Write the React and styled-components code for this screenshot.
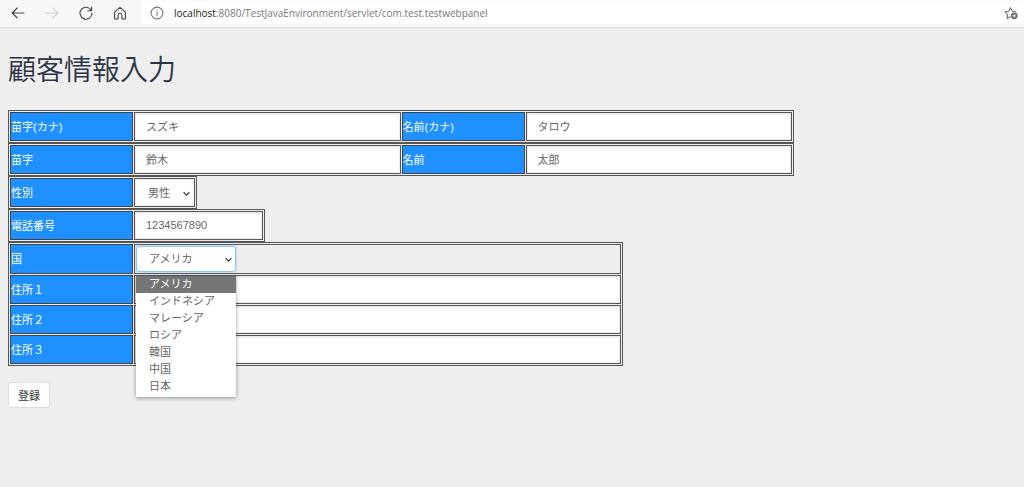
import React, { useState } from 'react'
import styled, { createGlobalStyle } from 'styled-components'

const GlobalStyle = createGlobalStyle`
  * {
    box-sizing: border-box;
  }
  body {
    margin: 0;
    background-color: #eee;
    font-family: 'Liberation Sans', 'Noto Sans CJK JP', sans-serif;
    font-size: 11px;
    color: #666;
  }
`
const Toolbar = styled.header`
  display: flex;
  align-items: center;
  height: 28px;
  padding-bottom: 2px;
  background-color: #f7f7f7;
  border-bottom: 1px solid #dcdcdc;
`
const NavButtons = styled.nav`
  display: flex;
  gap: 20px;
  padding: 0 14px 0 11px;
`
const NavButton = styled.button`
  display: flex;
  padding: 0;
  border: 0;
  background: none;
  color: ${props => (props.disabled ? '#d0d0d0' : '#444')};
`
const FavoriteButton = styled(NavButton)`
  color: #707070;
`
const AddressBar = styled.div`
  flex: 1;
  display: flex;
  align-items: center;
  height: 23px;
  padding: 0 6px 0 9px;
  border-radius: 3px 0 0 3px;
  background-color: #fff;
  color: #777;
`
const Url = styled.a`
  flex: 1;
  padding-left: 10px;
  font-family: 'Open Sans', sans-serif;
  font-size: 10px;
  line-height: 16px;
  color: #777;
  text-decoration: none;
`
const Host = styled.span`
  color: #222;
`
const Main = styled.main`
  padding: 19px 8px;
`
const Title = styled.h1`
  margin: 0 0 21px;
  font-family: 'Noto Sans CJK JP', sans-serif;
  font-size: 28px;
  font-weight: 350;
  line-height: 42px;
  color: #2c3347;
`
const Table = styled.table`
  table-layout: fixed;
  width: 100%;
  max-width: ${props => props.$maxWidth}px;
  border: 1px solid #555;
  border-spacing: 1px;
`
const LabelCell = styled.th`
  width: 123px;
  height: 29px;
  padding: 0;
  border: 1px solid #444;
  background-color: #1e90ff;
  color: #fff;
  font-weight: normal;
  line-height: 16px;
  text-align: left;
`
const FieldCell = styled.td`
  height: ${props => (props.$inset ? 30 : 29)}px;
  padding: ${props => (props.$inset ? '0 1px' : '0')};
  border: 1px solid #555;
`
const TextInput = styled.input`
  display: block;
  width: 100%;
  height: 27px;
  padding: 0 10px 2px;
  border: 1px solid #eee;
  border-radius: 2px;
  background-color: #fff;
  box-shadow: inset 0 1px 1px rgba(0, 0, 0, 0.07);
  color: #666;
  font: inherit;
  outline: none;
`
const SelectBox = styled.div`
  position: relative;
  width: ${props => props.$width};
  color: #444;
`
const StyledSelect = styled.select`
  display: block;
  appearance: none;
  width: 100%;
  height: ${props => (props.$active ? 26 : 27)}px;
  padding: 0 12px;
  border: 1px solid ${props => (props.$active ? '#8cc4ef' : '#eee')};
  border-radius: 3px;
  background-color: #fff;
  box-shadow: ${props =>
    props.$active ? '0 0 3px rgba(102, 175, 233, 0.6)' : 'none'};
  color: #666;
  font: inherit;
  outline: none;
`
const Chevron = styled.svg`
  position: absolute;
  top: 50%;
  right: 4px;
  margin-top: -2px;
  pointer-events: none;
`
const OptionList = styled.ul`
  position: absolute;
  z-index: 1;
  top: 100%;
  left: 0;
  width: 100%;
  margin: 4px 0 0;
  padding: 0 0 2px;
  list-style: none;
  background-color: #fff;
  box-shadow: 0 1px 4px rgba(0, 0, 0, 0.4);
`
const Option = styled.li`
  padding: 0 13px;
  line-height: 17px;
  color: ${props => (props['aria-selected'] ? '#fff' : '#666')};
  background-color: ${props => (props['aria-selected'] ? '#757575' : '#fff')};
`
const SubmitButton = styled.button`
  display: block;
  height: 26px;
  margin-top: 16px;
  padding: 0 9px;
  border: 1px solid #ddd;
  border-radius: 3px;
  background-color: #fff;
  color: #333;
  font: inherit;
`

const countries = [
  'アメリカ',
  'インドネシア',
  'マレーシア',
  'ロシア',
  '韓国',
  '中国',
  '日本',
]

const NavIcon = ({ children, size = 14 }) => (
  <svg
    width={size}
    height={size}
    viewBox="0 0 14 14"
    fill="none"
    stroke="currentColor"
    strokeWidth="1.1"
    strokeLinecap="round"
    strokeLinejoin="round"
    aria-hidden="true"
  >
    {children}
  </svg>
)

const TextField = ({ id, label, value }) => (
  <>
    <LabelCell scope="row">
      <label htmlFor={id}>{label}</label>
    </LabelCell>
    <FieldCell>
      <TextInput id={id} type="text" defaultValue={value} />
    </FieldCell>
  </>
)

const Select = ({ id, value, options, onChange, open, width }) => (
  <SelectBox $width={width}>
    <StyledSelect id={id} value={value} onChange={onChange} $active={open}>
      {options.map(o => (
        <option key={o}>{o}</option>
      ))}
    </StyledSelect>
    <Chevron width="7" height="6" viewBox="0 0 7 6" aria-hidden="true">
      <path
        d="M0.6 1.2 3.5 4.1 6.4 1.2"
        fill="none"
        stroke="currentColor"
        strokeWidth="1.3"
      />
    </Chevron>
    {open && (
      <OptionList role="listbox">
        {options.map(o => (
          <Option key={o} role="option" aria-selected={o === value}>
            {o}
          </Option>
        ))}
      </OptionList>
    )}
  </SelectBox>
)

const BrowserBar = () => (
  <Toolbar>
    <NavButtons>
      <NavButton aria-label="Back">
        <NavIcon>
          <path d="M13 7H1.2M6.2 2 1.2 7l5 5" />
        </NavIcon>
      </NavButton>
      <NavButton aria-label="Forward" disabled>
        <NavIcon>
          <path d="M1 7h11.8M7.8 2l5 5-5 5" />
        </NavIcon>
      </NavButton>
      <NavButton aria-label="Reload">
        <NavIcon>
          <path d="M12.4 4.6A6 6 0 1 0 13 7M12.6 1v3.8H8.8" />
        </NavIcon>
      </NavButton>
      <NavButton aria-label="Home">
        <NavIcon>
          <path d="M1.6 6.2 7 1.3l5.4 4.9v6a.8.8 0 0 1-.8.8H8.9V9.2a1.9 1.9 0 0 0-3.8 0V13H2.4a.8.8 0 0 1-.8-.8z" />
        </NavIcon>
      </NavButton>
    </NavButtons>
    <AddressBar>
      <NavIcon>
        <circle cx="7" cy="7" r="5.9" />
        <path d="M7 6.4v3.4M7 4.2v.2" />
      </NavIcon>
      <Url href="#">
        <Host>localhost</Host>
        :8080/TestJavaEnvironment/servlet/com.test.testwebpanel
      </Url>
      <FavoriteButton aria-label="Favorites">
        <NavIcon>
          <path d="M6.2 10.8 3 12.6l.6-3.9L.9 5.9l3.8-.6 1.8-3.5 1.8 3.5 3.6.5" />
          <circle cx="10.3" cy="9.8" r="2.8" fill="currentColor" />
          <path
            d="M9.2 9.8h2.2M10.3 8.7v2.2"
            stroke="#fff"
            strokeWidth="0.9"
          />
        </NavIcon>
      </FavoriteButton>
    </AddressBar>
  </Toolbar>
)

const App = () => {
  const [gender, setGender] = useState('男性')
  const [country, setCountry] = useState(countries[0])

  return (
    <>
      <GlobalStyle />
      <BrowserBar />
      <Main>
        <Title>顧客情報入力</Title>
        <Table $maxWidth={786}>
          <tbody>
            <tr>
              <TextField id="lastKana" label="苗字(カナ)" value="スズキ" />
              <TextField id="firstKana" label="名前(カナ)" value="タロウ" />
            </tr>
          </tbody>
        </Table>
        <Table $maxWidth={786}>
          <tbody>
            <tr>
              <TextField id="lastName" label="苗字" value="鈴木" />
              <TextField id="firstName" label="名前" value="太郎" />
            </tr>
          </tbody>
        </Table>
        <Table $maxWidth={189}>
          <tbody>
            <tr>
              <LabelCell scope="row">
                <label htmlFor="gender">性別</label>
              </LabelCell>
              <FieldCell>
                <Select
                  id="gender"
                  value={gender}
                  options={['男性', '女性']}
                  onChange={e => setGender(e.target.value)}
                  width="100%"
                />
              </FieldCell>
            </tr>
          </tbody>
        </Table>
        <Table $maxWidth={257}>
          <tbody>
            <tr>
              <TextField id="phone" label="電話番号" value="1234567890" />
            </tr>
          </tbody>
        </Table>
        <Table $maxWidth={615}>
          <tbody>
            <tr>
              <LabelCell scope="row">
                <label htmlFor="country">国</label>
              </LabelCell>
              <FieldCell $inset>
                <Select
                  id="country"
                  value={country}
                  options={countries}
                  onChange={e => setCountry(e.target.value)}
                  width="100px"
                  open
                />
              </FieldCell>
            </tr>
            <tr>
              <TextField id="address1" label="住所１" />
            </tr>
            <tr>
              <TextField id="address2" label="住所２" />
            </tr>
            <tr>
              <TextField id="address3" label="住所３" />
            </tr>
          </tbody>
        </Table>
        <SubmitButton type="submit">登録</SubmitButton>
      </Main>
    </>
  )
}

export default App
